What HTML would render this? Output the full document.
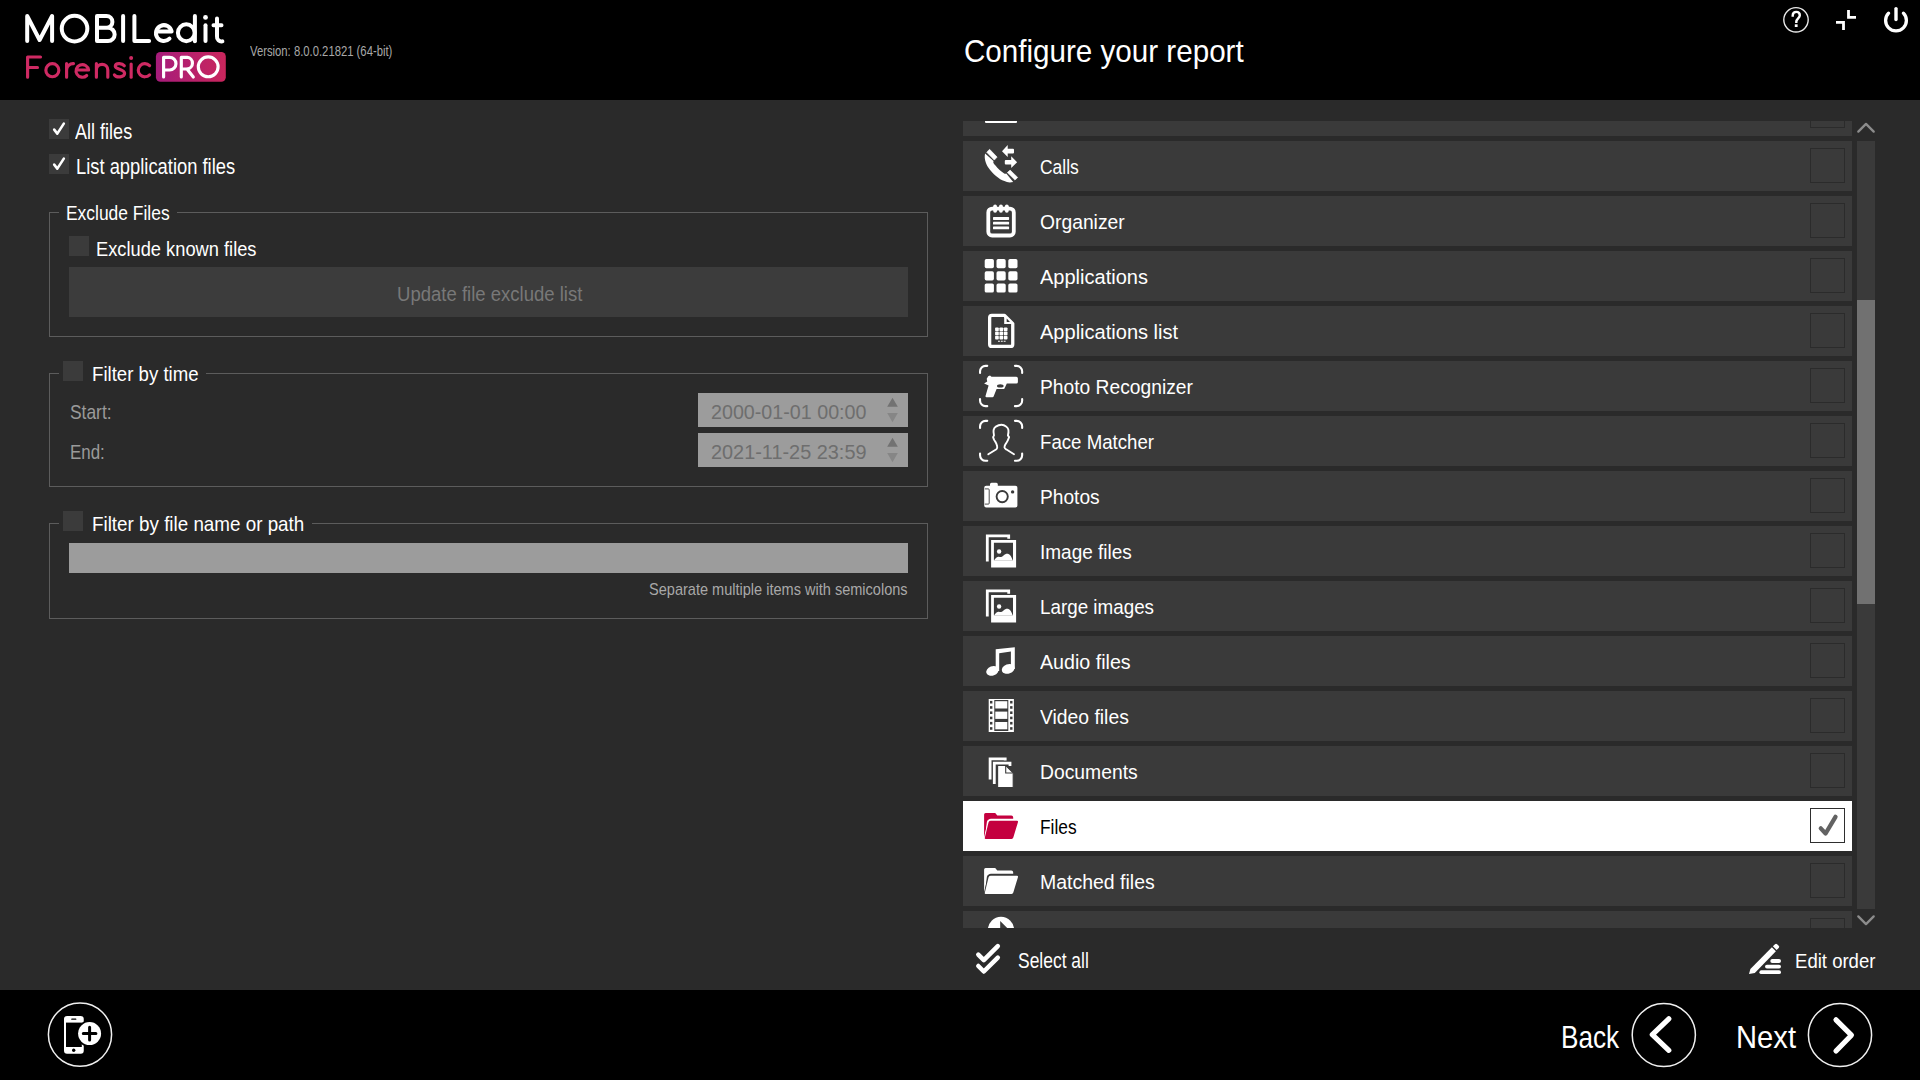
<!DOCTYPE html><html><head><meta charset="utf-8"><style>
*{margin:0;padding:0;box-sizing:border-box}
html,body{width:1920px;height:1080px;overflow:hidden;background:#2a2a2a;font-family:"Liberation Sans",sans-serif}
.t{position:absolute;white-space:nowrap;line-height:1;transform-origin:0 0}
.abs{position:absolute;display:block}
#hdr{position:absolute;left:0;top:0;width:1920px;height:100px;background:#000}
#ftr{position:absolute;left:0;top:990px;width:1920px;height:90px;background:#000}
.cb{position:absolute;width:20px;height:20px;background:#3b3b3b}
.gl{position:absolute;border:1px solid #5c5c5c}
.gap{position:absolute;background:#2a2a2a}
#list{position:absolute;left:963px;top:121px;width:889px;height:807px;overflow:hidden}
.row{position:absolute;left:0;width:889px;height:50px}
.ck{position:absolute;left:847px;top:7px;width:35px;height:35px;border:1.5px solid #2b2b2b}
</style></head><body>
<div id="hdr"></div>
<svg class="abs" style="left:0px;top:0px" width="260" height="100" viewBox="0 0 260 100"><path d="M27.2 41.1 V16 L39.6 40 L52.1 16 V41.1" fill="none" stroke="#fff" stroke-width="4.0" stroke-linecap="round" stroke-linejoin="round"/><circle cx="74.55" cy="28.6" r="12.8" fill="none" stroke="#fff" stroke-width="4.0" stroke-linecap="round" stroke-linejoin="round"/><path d="M97 16 H106.5 A5.9 5.9 0 0 1 106.5 27.8 H97 M97 27.8 H108 A6.6 6.6 0 0 1 108 41.1 H97 V16" fill="none" stroke="#fff" stroke-width="4.0" stroke-linecap="round" stroke-linejoin="round"/><path d="M123.1 16 V41.1" fill="none" stroke="#fff" stroke-width="4.0" stroke-linecap="round" stroke-linejoin="round"/><path d="M134.4 16 V41.1 H149.1" fill="none" stroke="#fff" stroke-width="4.0" stroke-linecap="round" stroke-linejoin="round"/><path d="M157 31.5 H171.6 A7.9 7.9 0 1 0 169.5 38.6" fill="none" stroke="#fff" stroke-width="4.0" stroke-linecap="round" stroke-linejoin="round"/><circle cx="186.3" cy="32.75" r="8.4" fill="none" stroke="#fff" stroke-width="4.0" stroke-linecap="round" stroke-linejoin="round"/><path d="M194.9 16 V41.2" fill="none" stroke="#fff" stroke-width="4.0" stroke-linecap="round" stroke-linejoin="round"/><path d="M205.5 25.2 V41" fill="none" stroke="#fff" stroke-width="4.0" stroke-linecap="round" stroke-linejoin="round"/><circle cx="205.5" cy="17.4" r="2.4" fill="#fff"/><path d="M217 18.6 V36.5 A4.5 4.5 0 0 0 222.4 41.4 M213.5 25.2 H221.5" fill="none" stroke="#fff" stroke-width="4.0" stroke-linecap="round" stroke-linejoin="round"/><path d="M27.6 77.2 V57 H40.5 M27.6 67.5 H37.5" fill="none" stroke="#cf2a63" stroke-width="3.15" stroke-linecap="round" stroke-linejoin="round"/><circle cx="52.35" cy="70.2" r="6.5" fill="none" stroke="#cf2a63" stroke-width="3.15" stroke-linecap="round" stroke-linejoin="round"/><path d="M66.6 77.2 V63.6 M66.6 70 A6.5 6.5 0 0 1 73.5 63.6" fill="none" stroke="#cf2a63" stroke-width="3.15" stroke-linecap="round" stroke-linejoin="round"/><path d="M78 70 H88.6 A6.3 6.3 0 1 0 86.7 75.5" fill="none" stroke="#cf2a63" stroke-width="3.15" stroke-linecap="round" stroke-linejoin="round"/><path d="M96.4 77.2 V63.6 M96.4 70 A5.6 5.6 0 0 1 107.8 70 V77.2" fill="none" stroke="#cf2a63" stroke-width="3.15" stroke-linecap="round" stroke-linejoin="round"/><path d="M124.3 65.8 C122 62.8 115.5 63 115.3 66.2 C115.2 69.5 124.6 69 124.6 73.3 C124.6 77.6 116.5 78 114.4 74.8" fill="none" stroke="#cf2a63" stroke-width="3.15" stroke-linecap="round" stroke-linejoin="round"/><path d="M131.15 64 V77.2" fill="none" stroke="#cf2a63" stroke-width="3.15" stroke-linecap="round" stroke-linejoin="round"/><circle cx="131.15" cy="58" r="2" fill="#cf2a63"/><path d="M149.6 65.6 A6.6 6.6 0 1 0 149.6 74.8" fill="none" stroke="#cf2a63" stroke-width="3.15" stroke-linecap="round" stroke-linejoin="round"/><defs><linearGradient id="pg" x1="0" y1="0" x2="1" y2="0"><stop offset="0" stop-color="#a61c7b"/><stop offset="1" stop-color="#c9265c"/></linearGradient></defs><rect x="155.9" y="52" width="69.9" height="29.8" rx="4.5" fill="url(#pg)"/><path d="M163.6 77 V57.3 H169.6 A6.3 6.3 0 0 1 169.6 70 H163.6" fill="none" stroke="#fff" stroke-width="3.15" stroke-linecap="round" stroke-linejoin="round"/><path d="M181.3 77 V57.3 H187.3 A5.9 5.9 0 0 1 187.3 69 H181.3 M187 69 L193.3 77" fill="none" stroke="#fff" stroke-width="3.15" stroke-linecap="round" stroke-linejoin="round"/><circle cx="208.2" cy="66.8" r="9.9" fill="none" stroke="#fff" stroke-width="3.15" stroke-linecap="round" stroke-linejoin="round"/></svg>
<div class="t" style="left:250.00px;top:44.50px;font-size:13.95px;color:#a8a8a8;transform:scaleX(0.8093);">Version: 8.0.0.21821 (64-bit)</div>
<div class="t" style="left:964.20px;top:35.80px;font-size:31.10px;color:#fff;transform:scaleX(0.9519);">Configure your report</div>
<svg class="abs" style="left:1760px;top:0px" width="160" height="50" viewBox="0 0 160 50"><circle cx="36" cy="19.8" r="12.2" fill="none" stroke="#e8e8e8" stroke-width="1.4"/><path d="M32.7 15.6 C32.7 12.9 34.4 11.9 36.2 11.9 C38.4 11.9 39.8 13.3 39.8 15.2 C39.8 18.2 36.3 18.4 36.3 21.8" fill="none" stroke="#fff" stroke-width="2.4" stroke-linecap="square"/><rect x="34.8" y="24.3" width="2.8" height="2.7" fill="#fff"/><path d="M88.5 10 V17.4 H96" fill="none" stroke="#fff" stroke-width="2.8"/><path d="M76 22.3 H83.5 V30" fill="none" stroke="#fff" stroke-width="2.8"/><path d="M128.6 13.2 A10.4 10.4 0 1 0 143.4 13.2" fill="none" stroke="#fff" stroke-width="3.3" stroke-linecap="round"/><path d="M136 8.6 V19.6" fill="none" stroke="#fff" stroke-width="3.4" stroke-linecap="round"/></svg>
<div class="cb" style="left:49px;top:119px"></div><svg class="abs" style="left:49px;top:119px" width="20" height="20" viewBox="0 0 20 20"><path d="M5.2 10.6 L8.3 14.6 L14.8 4.6" fill="none" stroke="#fff" stroke-width="2.6" stroke-linecap="round" stroke-linejoin="round"/></svg>
<div class="t" style="left:75.20px;top:122.01px;font-size:21.51px;color:#fff;transform:scaleX(0.8392);">All files</div>
<div class="cb" style="left:49px;top:154px"></div><svg class="abs" style="left:49px;top:154px" width="20" height="20" viewBox="0 0 20 20"><path d="M5.2 10.6 L8.3 14.6 L14.8 4.6" fill="none" stroke="#fff" stroke-width="2.6" stroke-linecap="round" stroke-linejoin="round"/></svg>
<div class="t" style="left:75.50px;top:156.62px;font-size:21.51px;color:#fff;transform:scaleX(0.8533);">List application files</div>
<div class="gl" style="left:49px;top:212px;width:879px;height:125px"></div><div class="gap" style="left:58.8px;top:210px;width:118.2px;height:5px"></div>
<div class="t" style="left:65.80px;top:203.21px;font-size:20.64px;color:#fff;transform:scaleX(0.8448);">Exclude Files</div>
<div class="cb" style="left:69px;top:236px"></div>
<div class="t" style="left:95.75px;top:238.25px;font-size:21.08px;color:#fff;transform:scaleX(0.8671);">Exclude known files</div>
<div class="abs" style="left:69px;top:267px;width:839px;height:50px;background:#3c3c3c"></div>
<div class="t" style="left:396.60px;top:283.92px;font-size:20.35px;color:#787878;transform:scaleX(0.9108);">Update file exclude list</div>
<div class="gl" style="left:49px;top:373px;width:879px;height:114px"></div><div class="gap" style="left:58.8px;top:371px;width:146.89999999999998px;height:5px"></div>
<div class="cb" style="left:63px;top:361px"></div>
<div class="t" style="left:91.80px;top:364.01px;font-size:20.64px;color:#fff;transform:scaleX(0.9033);">Filter by time</div>
<div class="t" style="left:69.90px;top:402.20px;font-size:20.06px;color:#9a9a9a;transform:scaleX(0.8678);">Start:</div>
<div class="t" style="left:69.90px;top:441.61px;font-size:20.06px;color:#9a9a9a;transform:scaleX(0.8433);">End:</div>
<div class="abs" style="left:698px;top:393px;width:210px;height:34px;background:#9c9c9c"></div>
<div class="t" style="left:710.90px;top:402.01px;font-size:20.35px;color:#6e6e6e;transform:scaleX(0.9681);">2000-01-01 00:00</div>
<svg class="abs" style="left:885px;top:393px" width="16" height="34" viewBox="0 0 16 34"><path d="M2.2 13.7 L7.5 4.7 L12.8 13.7Z" fill="#727272"/><path d="M2.2 20.1 L7.5 29.3 L12.8 20.1Z" fill="#868686"/></svg>
<div class="abs" style="left:698px;top:433px;width:210px;height:34px;background:#9c9c9c"></div>
<div class="t" style="left:710.90px;top:442.01px;font-size:20.35px;color:#6e6e6e;transform:scaleX(0.9773);">2021-11-25 23:59</div>
<svg class="abs" style="left:885px;top:433px" width="16" height="34" viewBox="0 0 16 34"><path d="M2.2 13.7 L7.5 4.7 L12.8 13.7Z" fill="#727272"/><path d="M2.2 20.1 L7.5 29.3 L12.8 20.1Z" fill="#868686"/></svg>
<div class="gl" style="left:49px;top:523px;width:879px;height:96px"></div><div class="gap" style="left:58.8px;top:521px;width:253.2px;height:5px"></div>
<div class="cb" style="left:63px;top:511px"></div>
<div class="t" style="left:91.80px;top:513.60px;font-size:20.64px;color:#fff;transform:scaleX(0.9121);">Filter by file name or path</div>
<div class="abs" style="left:69px;top:543px;width:839px;height:30px;background:#9c9c9c"></div>
<div class="t" style="left:648.60px;top:582.01px;font-size:15.70px;color:#a8a8a8;transform:scaleX(0.9270);">Separate multiple items with semicolons</div>
<div id="list">
<div class="row" style="top:-35px;background:#3a3a3a">
<div class="ck" style="border-color:#2b2b2b"></div>
</div>
<div class="row" style="top:20px;background:#3a3a3a">
<div class="ck" style="border-color:#2b2b2b"></div>
</div>
<div class="row" style="top:75px;background:#3a3a3a">
<div class="ck" style="border-color:#2b2b2b"></div>
</div>
<div class="row" style="top:130px;background:#3a3a3a">
<div class="ck" style="border-color:#2b2b2b"></div>
</div>
<div class="row" style="top:185px;background:#3a3a3a">
<div class="ck" style="border-color:#2b2b2b"></div>
</div>
<div class="row" style="top:240px;background:#3a3a3a">
<div class="ck" style="border-color:#2b2b2b"></div>
</div>
<div class="row" style="top:295px;background:#3a3a3a">
<div class="ck" style="border-color:#2b2b2b"></div>
</div>
<div class="row" style="top:350px;background:#3a3a3a">
<div class="ck" style="border-color:#2b2b2b"></div>
</div>
<div class="row" style="top:405px;background:#3a3a3a">
<div class="ck" style="border-color:#2b2b2b"></div>
</div>
<div class="row" style="top:460px;background:#3a3a3a">
<div class="ck" style="border-color:#2b2b2b"></div>
</div>
<div class="row" style="top:515px;background:#3a3a3a">
<div class="ck" style="border-color:#2b2b2b"></div>
</div>
<div class="row" style="top:570px;background:#3a3a3a">
<div class="ck" style="border-color:#2b2b2b"></div>
</div>
<div class="row" style="top:625px;background:#3a3a3a">
<div class="ck" style="border-color:#2b2b2b"></div>
</div>
<div class="row" style="top:680px;background:#ffffff">
<div class="ck" style="border-color:#2e2e2e"></div>
<svg class="abs" style="left:847px;top:7px" width="35" height="35" viewBox="0 0 35 35"><path d="M10.8 20.4 L15.6 25.5 L25.5 8.8" fill="none" stroke="#626262" stroke-width="4.3" stroke-linecap="round" stroke-linejoin="round"/></svg>
</div>
<div class="row" style="top:735px;background:#3a3a3a">
<div class="ck" style="border-color:#2b2b2b"></div>
</div>
<div class="row" style="top:790px;background:#3a3a3a">
<div class="ck" style="border-color:#2b2b2b"></div>
</div>
</div>
<div class="t" style="left:1039.70px;top:156.00px;font-size:21.08px;color:#ffffff;transform:scaleX(0.8283);">Calls</div>
<div class="t" style="left:1039.70px;top:211.00px;font-size:21.08px;color:#ffffff;transform:scaleX(0.9152);">Organizer</div>
<div class="t" style="left:1039.70px;top:266.00px;font-size:21.08px;color:#ffffff;transform:scaleX(0.9494);">Applications</div>
<div class="t" style="left:1039.70px;top:321.00px;font-size:21.08px;color:#ffffff;transform:scaleX(0.9507);">Applications list</div>
<div class="t" style="left:1039.70px;top:376.00px;font-size:21.08px;color:#ffffff;transform:scaleX(0.9125);">Photo Recognizer</div>
<div class="t" style="left:1039.70px;top:431.00px;font-size:21.08px;color:#ffffff;transform:scaleX(0.8851);">Face Matcher</div>
<div class="t" style="left:1039.70px;top:486.00px;font-size:21.08px;color:#ffffff;transform:scaleX(0.9097);">Photos</div>
<div class="t" style="left:1039.70px;top:541.00px;font-size:21.08px;color:#ffffff;transform:scaleX(0.9007);">Image files</div>
<div class="t" style="left:1039.70px;top:596.00px;font-size:21.08px;color:#ffffff;transform:scaleX(0.8926);">Large images</div>
<div class="t" style="left:1039.70px;top:651.00px;font-size:21.08px;color:#ffffff;transform:scaleX(0.9326);">Audio files</div>
<div class="t" style="left:1039.70px;top:706.00px;font-size:21.08px;color:#ffffff;transform:scaleX(0.9166);">Video files</div>
<div class="t" style="left:1039.70px;top:761.00px;font-size:21.08px;color:#ffffff;transform:scaleX(0.9164);">Documents</div>
<div class="t" style="left:1039.70px;top:816.00px;font-size:21.08px;color:#000000;transform:scaleX(0.8225);">Files</div>
<div class="t" style="left:1039.70px;top:871.00px;font-size:21.08px;color:#ffffff;transform:scaleX(0.9236);">Matched files</div>
<div class="abs" style="left:963px;top:121px;width:889px;height:807px;overflow:hidden"><svg class="abs" style="left:-963px;top:-121px" width="1920" height="1080" viewBox="0 0 1920 1080"><rect x="985" y="120.5" width="32" height="2.5" rx="1" fill="#fff"/><path d="M989.6 149.3 L997.1 157.1 L994.3 160.1 L986.7 152.2 Z" fill="#fff" stroke="#fff" stroke-width="0.6" stroke-linejoin="round"/><path d="M985.1 153.6 C984 158 985.5 163.5 988.1 167.3 C990.5 171 993 173.5 996.3 176.2 C999 178.6 1001.5 180 1004.4 181.1 C1007 182.2 1009.5 182.9 1013.2 181.9 L1006.3 173.6 C1005.5 173.9 1004.8 173.8 1004.2 173.5 C1002.5 172.6 1001 171.4 999.6 170.1 C998 168.6 996.5 167.2 995.5 165.6 C994.5 164.3 993.2 163.3 993.3 162.2 L993.5 161 Z" fill="#fff"/><path d="M1010.1 170.1 L1017.7 177.4 L1015 180.1 L1007.3 172.6 Z" fill="#fff" stroke="#fff" stroke-width="0.6" stroke-linejoin="round"/><path d="M1002 151.2 L1007.7 145.1 V148.7 H1013 A1 1 0 0 1 1014 149.7 V152.4 A1 1 0 0 1 1013 153.4 H1007.7 V156.9Z" fill="#fff"/><path d="M1017.1 162.2 L1011.2 156.3 V159.9 H1005.8 A1 1 0 0 0 1004.8 160.9 V163.4 A1 1 0 0 0 1005.8 164.4 H1011.2 V168.1Z" fill="#fff"/><rect x="988.3" y="208.6" width="25.5" height="26.9" rx="3.8" fill="none" stroke="#fff" stroke-width="3.8"/><rect x="993.20" y="204.4" width="3.8" height="8.3" rx="1.9" fill="#fff"/><rect x="999.05" y="204.4" width="3.8" height="8.3" rx="1.9" fill="#fff"/><rect x="1004.90" y="204.4" width="3.8" height="8.3" rx="1.9" fill="#fff"/><rect x="993" y="217.1" width="16.1" height="2.8" rx="0.6" fill="#fff"/><rect x="993" y="221.8" width="16.1" height="2.8" rx="0.6" fill="#fff"/><rect x="993" y="226.5" width="16.1" height="2.8" rx="0.6" fill="#fff"/><rect x="984.70" y="259.00" width="9.2" height="9.2" rx="1.7" fill="#fff"/><rect x="996.50" y="259.00" width="9.2" height="9.2" rx="1.7" fill="#fff"/><rect x="1008.30" y="259.00" width="9.2" height="9.2" rx="1.7" fill="#fff"/><rect x="984.70" y="271.20" width="9.2" height="9.2" rx="1.7" fill="#fff"/><rect x="996.50" y="271.20" width="9.2" height="9.2" rx="1.7" fill="#fff"/><rect x="1008.30" y="271.20" width="9.2" height="9.2" rx="1.7" fill="#fff"/><rect x="984.70" y="283.40" width="9.2" height="9.2" rx="1.7" fill="#fff"/><rect x="996.50" y="283.40" width="9.2" height="9.2" rx="1.7" fill="#fff"/><rect x="1008.30" y="283.40" width="9.2" height="9.2" rx="1.7" fill="#fff"/><path d="M991.9 315.35 H1004.5 L1012.75 323.6 V344.2 A2.25 2.25 0 0 1 1010.5 346.45 H991.9 A2.25 2.25 0 0 1 989.65 344.2 V317.6 A2.25 2.25 0 0 1 991.9 315.35 Z" fill="none" stroke="#fff" stroke-width="3.3" stroke-linejoin="round"/><path d="M1004.2 315.5 L1012.75 324 H1004.2Z" fill="#fff"/><path d="M1006.7 318.6 L1010 321.9 H1006.7Z" fill="#3a3a3a"/><rect x="995.10" y="327.40" width="3.7" height="3.7" rx="0.9" fill="#fff"/><rect x="999.45" y="327.40" width="3.7" height="3.7" rx="0.9" fill="#fff"/><rect x="1003.80" y="327.40" width="3.7" height="3.7" rx="0.9" fill="#fff"/><rect x="995.10" y="331.60" width="3.7" height="3.7" rx="0.9" fill="#fff"/><rect x="999.45" y="331.60" width="3.7" height="3.7" rx="0.9" fill="#fff"/><rect x="1003.80" y="331.60" width="3.7" height="3.7" rx="0.9" fill="#fff"/><rect x="995.10" y="335.80" width="3.7" height="3.7" rx="0.9" fill="#fff"/><rect x="999.45" y="335.80" width="3.7" height="3.7" rx="0.9" fill="#fff"/><rect x="1003.80" y="335.80" width="3.7" height="3.7" rx="0.9" fill="#fff"/><rect x="998.00" y="340.7" width="1.9" height="1.2" fill="#ddd"/><rect x="1000.85" y="340.7" width="1.9" height="1.2" fill="#ddd"/><rect x="1003.70" y="340.7" width="1.9" height="1.2" fill="#ddd"/><path d="M980.05 373.05 V371.35 A5.5 5.5 0 0 1 985.55 365.85 H987.25" fill="none" stroke="#fff" stroke-width="2.1" stroke-linecap="round"/><path d="M1014.95 365.85 H1016.6500000000001 A5.5 5.5 0 0 1 1022.1500000000001 371.35 V373.05" fill="none" stroke="#fff" stroke-width="2.1" stroke-linecap="round"/><path d="M980.05 398.95 V400.65 A5.5 5.5 0 0 0 985.55 406.15 H987.25" fill="none" stroke="#fff" stroke-width="2.1" stroke-linecap="round"/><path d="M1014.95 406.15 H1016.6500000000001 A5.5 5.5 0 0 0 1022.1500000000001 400.65 V398.95" fill="none" stroke="#fff" stroke-width="2.1" stroke-linecap="round"/><path d="M988.2 376.3 L990 375.6 L991.5 376.8 H1016.3 A1.6 1.6 0 0 1 1017.9 378.4 V381.9 A1.6 1.6 0 0 1 1016.3 383.5 H1006.8 L1004.6 388.3 A0.8 0.8 0 0 1 1003.8 388.9 H996.6 L993.6 396.4 A1.2 1.2 0 0 1 992.5 397.2 H986.6 A1.1 1.1 0 0 1 985.5 395.9 L988.6 385.4 L984.1 383.6 L987.2 381.5 L986.7 378.8 Z" fill="#fff"/><ellipse cx="1000.3" cy="385.9" rx="3.3" ry="1.6" fill="#3a3a3a"/><path d="M980.05 428.05 V426.35 A5.5 5.5 0 0 1 985.55 420.85 H987.25" fill="none" stroke="#fff" stroke-width="2.1" stroke-linecap="round"/><path d="M1014.95 420.85 H1016.6500000000001 A5.5 5.5 0 0 1 1022.1500000000001 426.35 V428.05" fill="none" stroke="#fff" stroke-width="2.1" stroke-linecap="round"/><path d="M980.05 453.55 V455.25 A5.5 5.5 0 0 0 985.55 460.75 H987.25" fill="none" stroke="#fff" stroke-width="2.1" stroke-linecap="round"/><path d="M1014.95 460.75 H1016.6500000000001 A5.5 5.5 0 0 0 1022.1500000000001 455.25 V453.55" fill="none" stroke="#fff" stroke-width="2.1" stroke-linecap="round"/><path d="M988.3 454.2 L996.4 449.3 C997.3 448.5 997.4 447.2 997.1 446.1 C996.7 444.5 996.2 443 995.4 441.9 C994.7 440.8 994 440 993.8 439.1 L993.1 437.1 L994 435.4 C993.6 433.5 993.3 431.5 993.6 429.9 C994 428.3 994.8 427.4 995.9 426.6 C997.5 425.5 999.5 424.8 1001.5 424.8 C1003.3 424.8 1004.9 425.6 1006.1 426.6 C1007.4 427.6 1008.2 428.6 1008.4 429.9 C1008.7 431.8 1008.4 433.6 1007.9 435.4 L1009.1 437.1 L1007.9 440.1 C1007.2 441.8 1006 443.2 1005.2 444.7 C1004.7 445.6 1004.5 446.6 1004.5 447.5 C1004.6 448.3 1005.2 448.8 1006.1 449.3 L1014 454.2" fill="none" stroke="#fff" stroke-width="1.9" stroke-linejoin="round" stroke-linecap="round"/><path d="M990 485.8 V484.3 A1.5 1.5 0 0 1 991.5 482.8 H996.3 A1.5 1.5 0 0 1 997.8 484.3 V485.8 H1015.4 A2 2 0 0 1 1017.4 487.8 V505.6 A2 2 0 0 1 1015.4 507.6 H986.2 A2 2 0 0 1 984.2 505.6 V487.8 A2 2 0 0 1 986.2 485.8Z" fill="#fff"/><path d="M984.8 488.9 H988.3 A0.9 0.9 0 0 1 989.2 489.8 V503.2 A0.9 0.9 0 0 1 988.3 504.1 H984.8" fill="none" stroke="#3a3a3a" stroke-width="0.9"/><circle cx="1002.2" cy="496.6" r="5.6" fill="none" stroke="#3a3a3a" stroke-width="1.9"/><circle cx="1012.6" cy="491.9" r="1.7" fill="#3a3a3a"/><path d="M987.3 561.5 V535.9000000000001 H1008.7 V538.8000000000001" fill="none" stroke="#fff" stroke-width="2.8"/><path d="M991.1 539.9000000000001 H1016.1 V567.6 H991.1Z M993.9 542.8000000000001 V560.2 H1013 V542.8000000000001Z" fill="#fff" fill-rule="evenodd"/><circle cx="999.1" cy="551.5" r="2.2" fill="#fff"/><path d="M994.6 559.6 C996 557.4000000000001 997.8 556.4000000000001 999 556.8000000000001 C1000.5 557.3000000000001 1002 557.0 1003.5 555.4000000000001 C1005 553.9000000000001 1007 553.2 1008.5 553.9000000000001 C1010.2 554.7 1011.6 556.8000000000001 1012.4 559.6 V560.2 H994.6Z" fill="#fff"/><path d="M987.3 616.5 V590.9000000000001 H1008.7 V593.8000000000001" fill="none" stroke="#fff" stroke-width="2.8"/><path d="M991.1 594.9000000000001 H1016.1 V622.6 H991.1Z M993.9 597.8000000000001 V615.2 H1013 V597.8000000000001Z" fill="#fff" fill-rule="evenodd"/><circle cx="999.1" cy="606.5" r="2.2" fill="#fff"/><path d="M994.6 614.6 C996 612.4000000000001 997.8 611.4000000000001 999 611.8000000000001 C1000.5 612.3000000000001 1002 612.0 1003.5 610.4000000000001 C1005 608.9000000000001 1007 608.2 1008.5 608.9000000000001 C1010.2 609.7 1011.6 611.8000000000001 1012.4 614.6 V615.2 H994.6Z" fill="#fff"/><ellipse cx="992.4" cy="670.9" rx="6.4" ry="4.6" transform="rotate(-20 992.4 670.9)" fill="#fff"/><ellipse cx="1008.2" cy="668.9" rx="6.6" ry="4.7" transform="rotate(-20 1008.2 668.9)" fill="#fff"/><path d="M995.7 671 V649.3 L1014.8 647.2 V669 H1010.9 V651.6 L999.2 653.3 V671Z" fill="#fff"/><rect x="988.7" y="699" width="25.2" height="33" fill="#fff"/><rect x="994.3" y="700" width="14" height="31" fill="#3a3a3a"/><rect x="995.3" y="701.2" width="12" height="7.3" fill="#fff"/><rect x="995.3" y="711.6" width="12" height="7.3" fill="#fff"/><rect x="995.3" y="722.0" width="12" height="7.3" fill="#fff"/><rect x="990" y="700.90" width="2.4" height="2.6" fill="#3a3a3a"/><rect x="1010.1" y="700.90" width="2.4" height="2.6" fill="#3a3a3a"/><rect x="990" y="706.15" width="2.4" height="2.6" fill="#3a3a3a"/><rect x="1010.1" y="706.15" width="2.4" height="2.6" fill="#3a3a3a"/><rect x="990" y="711.40" width="2.4" height="2.6" fill="#3a3a3a"/><rect x="1010.1" y="711.40" width="2.4" height="2.6" fill="#3a3a3a"/><rect x="990" y="716.65" width="2.4" height="2.6" fill="#3a3a3a"/><rect x="1010.1" y="716.65" width="2.4" height="2.6" fill="#3a3a3a"/><rect x="990" y="721.90" width="2.4" height="2.6" fill="#3a3a3a"/><rect x="1010.1" y="721.90" width="2.4" height="2.6" fill="#3a3a3a"/><rect x="990" y="727.15" width="2.4" height="2.6" fill="#3a3a3a"/><rect x="1010.1" y="727.15" width="2.4" height="2.6" fill="#3a3a3a"/><path d="M990.1 779.6 V758.8 H1005.2 V760.5" fill="none" stroke="#fff" stroke-width="2.8"/><path d="M994.3 783.9 V763.1 H1010 V766" fill="none" stroke="#fff" stroke-width="2.8"/><path d="M997.6 765.5 H1005.8 L1013.2 772.9 V787.6 H997.6Z" fill="#fff" stroke="#3a3a3a" stroke-width="1.1"/><path d="M1005.7 765.9 V773 H1012.8" fill="none" stroke="#3a3a3a" stroke-width="1.1"/><path d="M984.1 837 V814.5 A1.5 1.5 0 0 1 985.6 813 H995.2 L997.3 815.6 H1011.3 A1.9 1.9 0 0 1 1013.2 817.5 V818.8 H991 C988.8 818.8 987.4 820.2 986.9 821.7 L984.9 837 Z" fill="#c4003f"/><path d="M990.6 820.7 H1017 A1.1 1.1 0 0 1 1018 822 L1013.3 837.6 A1.8 1.8 0 0 1 1011.6 838.9 H985.6 A0.9 0.9 0 0 1 984.8 837.8 L988.5 822.6 A2.4 2.4 0 0 1 990.6 820.7 Z" fill="#c4003f" stroke="#fff" stroke-width="1.7"/><path d="M990.6 820.7 H1017 A1.1 1.1 0 0 1 1018 822 L1013.3 837.6 A1.8 1.8 0 0 1 1011.6 838.9 H985.6 A0.9 0.9 0 0 1 984.8 837.8 L988.5 822.6 A2.4 2.4 0 0 1 990.6 820.7 Z" fill="#c4003f"/><path d="M984.1 892 V869.5 A1.5 1.5 0 0 1 985.6 868 H995.2 L997.3 870.6 H1011.3 A1.9 1.9 0 0 1 1013.2 872.5 V873.8 H991 C988.8 873.8 987.4 875.2 986.9 876.7 L984.9 892 Z" fill="#fff"/><path d="M990.6 875.7 H1017 A1.1 1.1 0 0 1 1018 877 L1013.3 892.6 A1.8 1.8 0 0 1 1011.6 893.9 H985.6 A0.9 0.9 0 0 1 984.8 892.8 L988.5 877.6 A2.4 2.4 0 0 1 990.6 875.7 Z" fill="#fff" stroke="#3a3a3a" stroke-width="1.7"/><path d="M990.6 875.7 H1017 A1.1 1.1 0 0 1 1018 877 L1013.3 892.6 A1.8 1.8 0 0 1 1011.6 893.9 H985.6 A0.9 0.9 0 0 1 984.8 892.8 L988.5 877.6 A2.4 2.4 0 0 1 990.6 875.7 Z" fill="#fff"/><circle cx="1001" cy="930" r="13.2" fill="#fff"/><path d="M1000.2 920.9 L1008.2 929 H1000.2Z" fill="#3a3a3a"/></svg></div>
<div class="abs" style="left:1857px;top:141px;width:18px;height:768px;background:#3a3a3a"></div>
<div class="abs" style="left:1857px;top:300px;width:18px;height:304px;background:#717171"></div>
<svg class="abs" style="left:1855px;top:118px" width="22" height="18" viewBox="0 0 22 18"><path d="M3.3 13.6 L11 5.9 L18.7 13.6" fill="none" stroke="#8c8c8c" stroke-width="2.3" stroke-linecap="round" stroke-linejoin="round"/></svg>
<svg class="abs" style="left:1855px;top:912px" width="22" height="18" viewBox="0 0 22 18"><path d="M3.3 4.4 L11 12.1 L18.7 4.4" fill="none" stroke="#8c8c8c" stroke-width="2.3" stroke-linecap="round" stroke-linejoin="round"/></svg>
<svg class="abs" style="left:0px;top:0px" width="1920" height="1080" viewBox="0 0 1920 1080"><path d="M978.3 954.6 L983.8 960.1 L997.8 946.2" fill="none" stroke="#fff" stroke-width="4.5" stroke-linecap="round" stroke-linejoin="round"/><path d="M978.3 966 L983.8 971.5 L997.8 957.6" fill="none" stroke="#fff" stroke-width="4.5" stroke-linecap="round" stroke-linejoin="round"/><path d="M1749 973.9 L1750.4 969 L1771.9 947.3 L1775.9 951.2 L1754.8 973 Z" fill="#fff"/><path d="M1772.9 946.3 L1775 944.2 A1.5 1.5 0 0 1 1777.1 944.2 L1778.7 945.8 A1.5 1.5 0 0 1 1778.7 947.9 L1776.6 950.1 Z" fill="#fff"/><path d="M1772.25 961.05 H1779.05" fill="none" stroke="#fff" stroke-width="3.9" stroke-linecap="round"/><path d="M1766.95 966.6 H1779.05" fill="none" stroke="#fff" stroke-width="3.9" stroke-linecap="round"/><path d="M1761.35 972.15 H1779.05" fill="none" stroke="#fff" stroke-width="3.9" stroke-linecap="round"/></svg>
<div class="t" style="left:1017.70px;top:950.20px;font-size:21.22px;color:#fff;transform:scaleX(0.8224);">Select all</div>
<div class="t" style="left:1795.00px;top:951.00px;font-size:20.78px;color:#fff;transform:scaleX(0.8935);">Edit order</div>
<div id="ftr"></div>
<svg class="abs" style="left:0px;top:0px" width="1920" height="1080" viewBox="0 0 1920 1080"><circle cx="80" cy="1034.6" r="31.6" fill="none" stroke="#f0f0f0" stroke-width="1.5"/><rect x="64" y="1016" width="19.75" height="37.75" rx="3" fill="#fff"/><rect x="66" y="1022.6" width="15.8" height="24.4" fill="#000"/><rect x="71.2" y="1018.6" width="5.2" height="1.2" rx="0.6" fill="#000"/><circle cx="73.7" cy="1050.2" r="1.7" fill="#000"/><circle cx="89.6" cy="1033.6" r="13.3" fill="#000"/><circle cx="89.6" cy="1033.6" r="11.5" fill="#fff"/><path d="M83.3 1033.6 H95.9 M89.6 1027.3 V1039.9" fill="none" stroke="#000" stroke-width="3" stroke-linecap="round"/><circle cx="1663.8" cy="1035" r="31.6" fill="none" stroke="#f0f0f0" stroke-width="1.5"/><path d="M1668.8 1018.8 L1652.3 1034.6 L1668.8 1050.3" fill="none" stroke="#fff" stroke-width="5.2" stroke-linecap="round" stroke-linejoin="round"/><circle cx="1840" cy="1035" r="31.6" fill="none" stroke="#f0f0f0" stroke-width="1.5"/><path d="M1836 1019.8 L1851.4 1035.2 L1836 1051" fill="none" stroke="#fff" stroke-width="5.2" stroke-linecap="round" stroke-linejoin="round"/></svg>
<div class="t" style="left:1560.60px;top:1022.00px;font-size:31.25px;color:#fff;transform:scaleX(0.8372);">Back</div>
<div class="t" style="left:1736.00px;top:1022.00px;font-size:31.25px;color:#fff;transform:scaleX(0.9339);">Next</div>
</body></html>
